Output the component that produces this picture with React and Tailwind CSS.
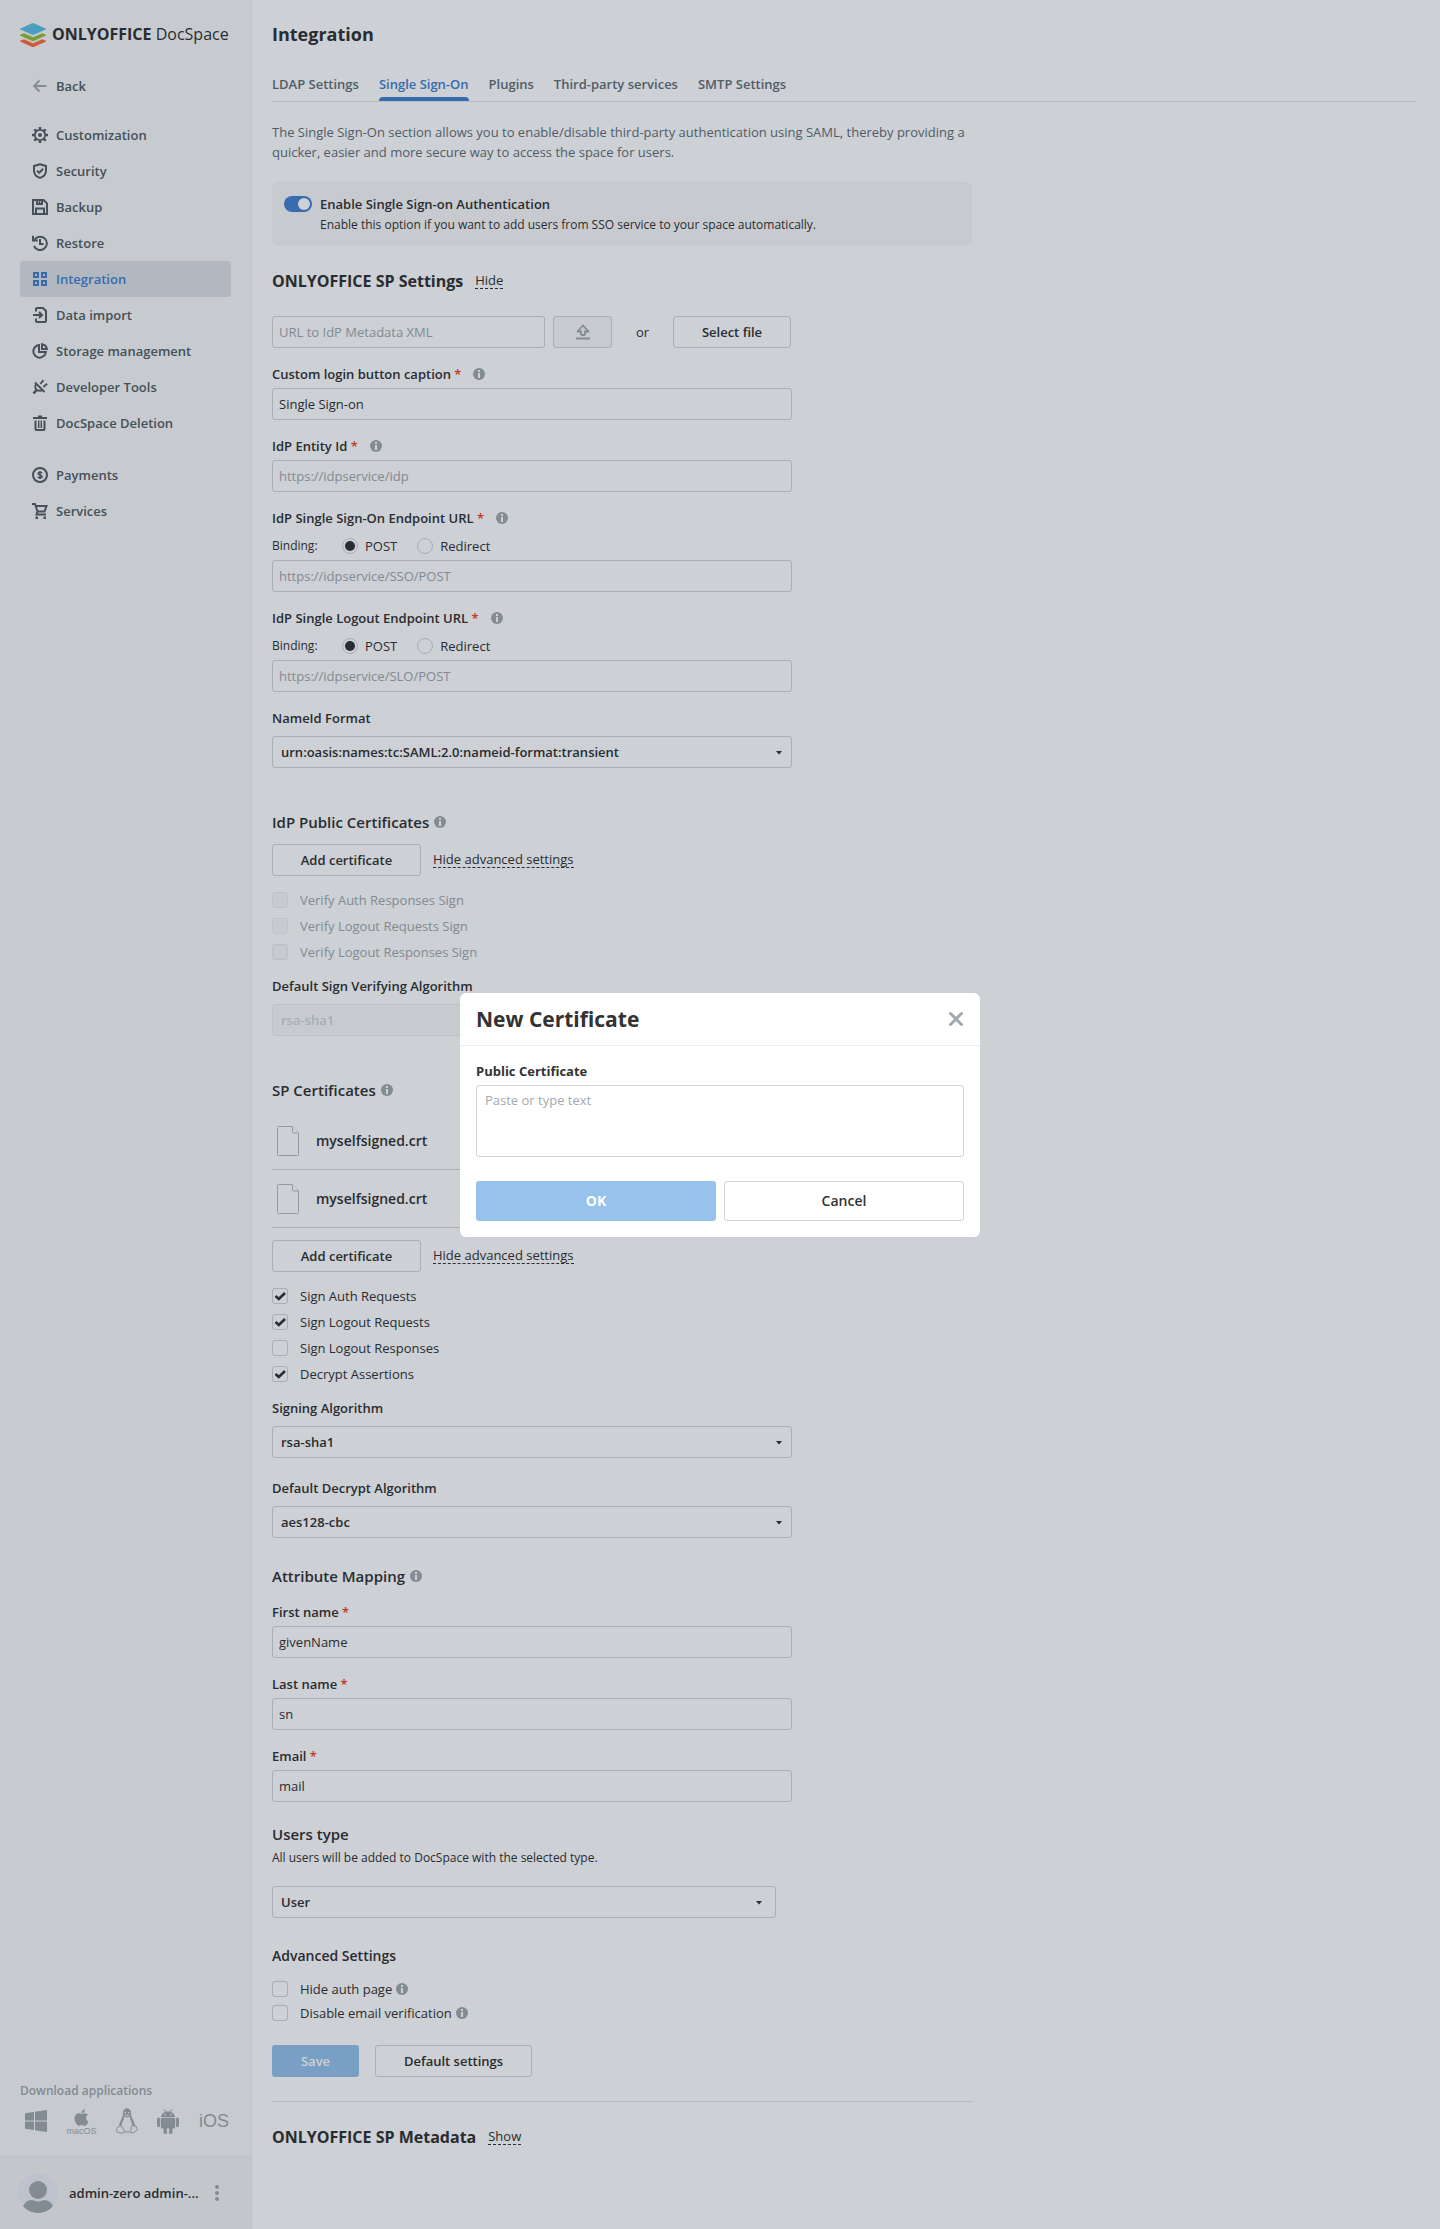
import React from "react";
import { FaApple } from "react-icons/fa";

const Svg = ({ children, size = 16, ...rest }) => (
  <svg width={size} height={size} viewBox="0 0 16 16" fill="none" stroke="currentColor" strokeWidth="2" aria-hidden="true" className="shrink-0" {...rest}>
    {children}
  </svg>
);

const icons = {
  customization: (
    <Svg>
      <circle cx="8" cy="8" r="5.2" strokeWidth="1.800" />
      <circle cx="8" cy="8" r="2" fill="currentColor" stroke="none" />
      <path strokeWidth="2.6" d="M8 0v2.6M8 13.4V16M0 8h2.6M13.4 8H16M2.3 2.3l1.9 1.9M11.8 11.8l1.900 1.900M2.3 13.7l1.9-1.9M11.8 4.2l1.9-1.9" />
    </Svg>
  ),
  security: (
    <Svg>
      <path d="M8 1.2 14 3v4.500c0 3.600-2.400 6.200-6 7.400-3.600-1.200-6-3.800-6-7.400V3z" strokeLinejoin="round" />
      <path d="m5 7.600 2.200 2.200 4-4" />
    </Svg>
  ),
  backup: (
    <Svg>
      <path d="M1 1h10.600L15 4.400V15H1z" />
      <path d="M5 1v4h5V1M4 15V9.500h8V15" />
      <path d="M7.500 2v2" strokeWidth="1.500" />
    </Svg>
  ),
  restore: (
    <Svg>
      <path d="M2.600 4.600A6.700 6.700 0 1 1 2 11" />
      <path d="M1 0.800v4.700h4.700M8 4v5h3.500" />
    </Svg>
  ),
  integration: (
    <Svg>
      <path d="M2 2h4v4H2zM10 2h4v4h-4zM2 10h4v4H2zM10 10h4v4h-4z" />
    </Svg>
  ),
  dataImport: (
    <Svg>
      <path d="M4 4.500V2a1 1 0 0 1 1-1h6l3 3v10a1 1 0 0 1-1 1H5a1 1 0 0 1-1-1v-2.500" />
      <path d="M1 8h8.500M7 5l3 3-3 3" />
    </Svg>
  ),
  storage: (
    <Svg>
      <path d="M7 2.100A6.300 6.300 0 1 0 13.900 9H7z" />
      <path d="M10 1.200c2.700.4 4.500 2.200 4.900 4.800H10z" />
    </Svg>
  ),
  developer: (
    <Svg strokeWidth="1.800">
      <path d="M3 3.500 12.500 13M4 4.800c-1 2.600-.9 4.700.3 5.900 1.200 1.200 3.600 1.300 6.700.6" />
      <path d="M8.300 5 11.500 1.200M11.300 8l3.900-3.200" />
      <path strokeWidth="2.600" d="M4.800 10.800 1.500 14.500" />
    </Svg>
  ),
  trash: (
    <Svg>
      <path d="M1 3h14M6 1.500h4M3.500 5.500V14a1 1 0 0 0 1 1h7a1 1 0 0 0 1-1V5.500" />
      <path d="M6.700 5.500V13M9.300 5.500V13" strokeWidth="1.500" />
    </Svg>
  ),
  payments: (
    <Svg>
      <circle cx="8" cy="8" r="7" />
      <path strokeWidth="1.500" d="M10 6.200C9.600 5.500 8.900 5.200 8 5.200c-1.200 0-1.900.5-1.900 1.300 0 2 3.900.9 3.900 3 0 .8-.8 1.300-2 1.300-.9 0-1.700-.3-2.100-1M8 4v8" />
    </Svg>
  ),
  services: (
    <Svg>
      <path d="M0 1h3l2.500 7.500h7L14.500 3H4M5.500 8.500 4.500 11.500H14" />
      <path fill="currentColor" stroke="none" d="M3.500 13.500H6V16H3.500zM11.500 13.500H14V16h-2.500z" />
    </Svg>
  ),
};

const Info = () => (
  <button type="button" aria-label="More information" className="text-[#a3a9ae]">
    <svg width="12" height="12" viewBox="0 0 12 12" className="block" aria-hidden="true">
      <circle cx="6" cy="6" r="6" fill="currentColor" />
      <path fill="#fff" d="M5 2h2v2H5zM5 5h2v5H5z" />
    </svg>
  </button>
);

function NavItem({ icon, label, active }) {
  return (
    <a
      href="#"
      className={
        "flex h-9 items-center gap-2 rounded-[3px] px-3 font-semibold " +
        (active ? "bg-[#dfe2e6] text-[#4781d1]" : "text-[#555f65]")
      }
    >
      {icons[icon]}
      {label}
    </a>
  );
}

const WindowsLogo = () => (
  <svg width="22" height="22" viewBox="0 0 22 22" fill="currentColor" aria-hidden="true">
    <path d="M0 3.200 9 2v8.500H0zM10 1.800 22 0v10.500H10zM0 11.500h9V20l-9-1.200zM10 11.500h12V22l-12-1.800z" />
  </svg>
);

const LinuxLogo = () => (
  <svg width="22" height="26" viewBox="0 0 22 26" fill="none" stroke="currentColor" aria-hidden="true">
    <path fill="currentColor" d="M7.500 7.500C7 3.500 8 .8 11 .8s4 2.700 3.500 6.700L11 9z" />
    <path d="M7.500 7.500C7 11 4 13 3.800 18.500M14.500 7.500C15 11 18 13 18.200 18.500" strokeWidth="1.500" />
    <path d="M8 8.500c-.5 3.500-2.500 5.500-2.700 9M14 8.500c.5 3.500 2.500 5.500 2.700 9M8 24h6.500" />
    <path d="M4 17.500c1.500 0 2.500 2.500 4 4.500 1 1.800 0 3.200-2 3.200s-3-1-5-1.200c-1.200-.3.200-2-.2-3.700 0-1.500 2.200-.8 3.200-2.800zM16.500 17.200c-1.700.2-1 3.500-1.800 5.500-.4 1.800.8 2.700 2.300 2.300 1.800-.5 2-2 4.300-3 .8-.5-.8-1.200-1-3-.3-2-1.800-.3-3.800-1.800z" />
    <path stroke="#f8f9f9" d="M8.500 4.500h1.500M12 4.500h1.500M9 6.500l2 1 2-1" />
  </svg>
);

const AndroidLogo = () => (
  <svg width="22" height="25" viewBox="0 0 22 25" fill="currentColor" aria-hidden="true">
    <path d="M4 8.200C4 5 7 2.500 11 2.500s7 2.500 7 5.700z" />
    <path d="M7.300.6 8.600 3M14.700.6 13.400 3" stroke="currentColor" strokeLinecap="round" />
    <path d="M4 9h14v9.500a1 1 0 0 1-1 1H5a1 1 0 0 1-1-1z" />
    <rect x="0" y="8.500" width="3.200" height="9.500" rx="1.600" />
    <rect x="18.800" y="8.500" width="3.200" height="9.500" rx="1.600" />
    <rect x="6.500" y="16" width="3.400" height="9" rx="1.600" />
    <rect x="12.100" y="16" width="3.400" height="9" rx="1.600" />
    <circle cx="8" cy="5.700" r=".7" fill="#f8f9f9" />
    <circle cx="14" cy="5.700" r=".7" fill="#f8f9f9" />
  </svg>
);

function Sidebar() {
  return (
    <aside className="flex w-[252px] shrink-0 flex-col border-r border-[#eceef1] bg-[#f8f9f9]">
      <a href="#" className="mt-[23px] flex h-6 items-start gap-1.5 pl-5 text-[#333]">
        <svg width="26" height="24" viewBox="0 0 26 24" aria-hidden="true" className="shrink-0">
          <path fill="#ff6f3d" d="M.5 17.600 4 16.200l9 4 9-4 3.500 1.400c.7.300.7.800 0 1.100l-11.100 5a3 3 0 0 1-2.800 0l-11.100-5c-.7-.3-.7-.8 0-1.100z" />
          <path fill="#95c038" d="M.5 11.600 4 10.200l9 4 9-4 3.500 1.400c.7.300.7.800 0 1.100l-11.100 5a3 3 0 0 1-2.800 0l-11.100-5c-.7-.3-.7-.8 0-1.100z" />
          <path fill="#5dc0e8" d="M.5 5.400 11.600.4a3 3 0 0 1 2.800 0l11.100 5c.7.300.7.900 0 1.200l-11.100 5a3 3 0 0 1-2.800 0L.5 6.600c-.7-.3-.7-.9 0-1.200z" />
        </svg>
        <span className="text-base leading-[22px] whitespace-nowrap">
          <b>ONLYOFFICE</b> DocSpace
        </span>
      </a>
      <nav className="mt-[21px] flex flex-col px-5">
        <a href="#" className="flex h-9 items-center gap-2 px-3 font-semibold text-[#555f65]">
          <Svg strokeWidth="1.800" className="shrink-0 text-[#a3a9ae]">
            <path d="M14.500 8H2M7.500 2.500 2 8l5.500 5.500" />
          </Svg>
          Back
        </a>
        <div className="mt-[13px] flex flex-col">
          <NavItem icon="customization" label="Customization" />
          <NavItem icon="security" label="Security" />
          <NavItem icon="backup" label="Backup" />
          <NavItem icon="restore" label="Restore" />
          <NavItem icon="integration" label="Integration" active />
          <NavItem icon="dataImport" label="Data import" />
          <NavItem icon="storage" label="Storage management" />
          <NavItem icon="developer" label="Developer Tools" />
          <NavItem icon="trash" label="DocSpace Deletion" />
        </div>
        <div className="mt-4 flex flex-col">
          <NavItem icon="payments" label="Payments" />
          <NavItem icon="services" label="Services" />
        </div>
      </nav>
      <div className="mt-auto px-5 pb-[21px]">
        <p className="text-xs leading-4 font-semibold text-[#a3a9ae]">Download applications</p>
        <div className="mt-2 flex h-7 items-center justify-between pr-0.5 pl-[5px] text-[#a3a9ae]">
          <a href="#" aria-label="Windows"><WindowsLogo /></a>
          <a href="#" aria-label="macOS" className="flex flex-col items-center font-['Liberation_Sans',sans-serif] text-[9px] leading-2">
            <FaApple size={19} />
            macOS
          </a>
          <a href="#" aria-label="Linux"><LinuxLogo /></a>
          <a href="#" aria-label="Android"><AndroidLogo /></a>
          <a href="#" className="font-['Liberation_Sans',sans-serif] text-lg leading-6">iOS</a>
        </div>
      </div>
      <div className="flex h-[73px] items-center border-t border-[#eceef1] bg-[#f3f4f4] pl-[18px]">
        <svg width="40" height="40" viewBox="0 0 40 40" aria-hidden="true" className="shrink-0">
          <clipPath id="avatar"><circle cx="20" cy="20" r="20" /></clipPath>
          <g clipPath="url(#avatar)">
            <circle cx="20" cy="20" r="20" fill="#ebeef5" />
            <circle cx="20" cy="17" r="9" fill="#a3a9ae" />
            <path fill="#a3a9ae" d="M5 33c2-4 5-6 8.500-6 2 0 3.500 1.500 6.500 1.500s4.500-1.500 6.500-1.500c3.500 0 6.500 2 8.500 6-3 4.500-9 7-15 7S8 37.500 5 33z" />
          </g>
        </svg>
        <span className="ml-[11px] w-[132px] font-semibold whitespace-nowrap text-[#333]">admin-zero admin-...</span>
        <button type="button" aria-label="Profile menu" className="ml-3.5 text-[#a3a9ae]">
          <svg width="4" height="16" viewBox="0 0 4 16" fill="currentColor" className="block" aria-hidden="true">
            <circle cx="2" cy="2" r="2" /><circle cx="2" cy="8" r="2" /><circle cx="2" cy="14" r="2" />
          </svg>
        </button>
      </div>
    </aside>
  );
}

const inputClass =
  "block h-8 rounded-[3px] border border-[#d0d5da] bg-white px-1.5 text-[#333] placeholder:text-[#a3a9ae] placeholder:opacity-100";
const buttonClass = "h-8 rounded-[3px] border border-[#d0d5da] bg-white text-center font-semibold text-[#333]";

const Star = () => <span className="text-[#f2431e]"> *</span>;

function Field({ id, label, info, binding, placeholder, value }) {
  return (
    <div className="mt-4">
      <div className="flex h-5 items-center gap-3">
        <label htmlFor={id} className="font-semibold">{label}<Star /></label>
        {info && <Info />}
      </div>
      {binding && (
        <div role="radiogroup" aria-label={label + " binding"} className="mt-2 flex h-5 items-center">
          <span className="w-[70px] text-xs leading-5">Binding:</span>
          <Radio name={id} label="POST" checked />
          <Radio name={id} label="Redirect" />
        </div>
      )}
      <input id={id} className={inputClass + " mt-1 w-full"} placeholder={placeholder} defaultValue={value} />
    </div>
  );
}

function Radio({ name, label, checked }) {
  return (
    <label className="mr-5 flex items-center gap-[7px]">
      <input
        type="radio"
        name={name + "-binding"}
        defaultChecked={checked}
        className="grid size-4 appearance-none place-items-center rounded-full border border-[#d0d5da] bg-white before:size-2.5 before:rounded-full checked:before:bg-[#333]"
      />
      {label}
    </label>
  );
}

function Select({ id, label, value, disabled, width }) {
  return (
    <div className={"relative " + (width || "")}>
      <select
        id={id}
        aria-label={label}
        disabled={disabled}
        className={
          "block h-8 w-full appearance-none rounded-[3px] border px-2 font-semibold opacity-100 " +
          (disabled ? "border-[#eceef1] bg-[#f8f9f9] text-[#d0d5da]" : "border-[#d0d5da] bg-white text-[#333]")
        }
      >
        <option>{value}</option>
      </select>
      {!disabled && (
        <svg width="6" height="4" viewBox="0 0 6 4" className={"pointer-events-none absolute top-[15px] " + (width ? "right-3.5" : "right-2.5")} aria-hidden="true">
          <path d="M0 0h6L3 3.500z" fill="#333" />
        </svg>
      )}
    </div>
  );
}

function Check({ label, checked, disabled, info }) {
  return (
    <div className="flex h-4 items-center gap-1">
      <label className={"flex items-center gap-3 " + (disabled ? "text-[#a3a9ae]" : "text-[#333]")}>
        <span className="relative size-4">
          <input
            type="checkbox"
            defaultChecked={checked}
            disabled={disabled}
            className={
              "block size-4 appearance-none rounded-[3px] border " +
              (disabled ? "border-[#eceef1] bg-[#f8f9f9]" : "border-[#d0d5da] bg-white")
            }
          />
          {checked && (
            <svg width="16" height="16" viewBox="0 0 16 16" className="pointer-events-none absolute inset-0" aria-hidden="true">
              <path d="M3.500 8 6.800 11 13 5" fill="none" stroke="#333" strokeWidth="2.600" />
            </svg>
          )}
        </span>
        {label}
      </label>
      {info && <Info />}
    </div>
  );
}

const DashedLink = ({ children }) => (
  <a href="#" className="border-b border-dashed border-[#333] leading-[15px]">{children}</a>
);

const SubHeading = ({ children, info = true }) => (
  <div className="flex h-5 items-center gap-[5px]">
    <h3 className="text-[15px] leading-5 font-semibold">{children}</h3>
    {info && <Info />}
  </div>
);

function CertRow() {
  return (
    <li className="flex h-[58px] items-center border-b border-[#d0d5da] pl-[5px]">
      <svg width="22" height="30" viewBox="0 0 22 30" fill="#fff" stroke="#b8bcc0" aria-hidden="true">
        <path d="M1.500.5H15l6.500 6.500v21.500a1 1 0 0 1-1 1h-19a1 1 0 0 1-1-1V1.500a1 1 0 0 1 1-1z" />
        <path d="M15.500.5V6a1 1 0 0 0 1 1h5" />
      </svg>
      <span className="ml-[17px] text-sm font-semibold">myselfsigned.crt</span>
    </li>
  );
}

function CertActions() {
  return (
    <div className="flex items-center gap-3">
      <button type="button" className={buttonClass + " w-[149px]"}>Add certificate</button>
      <DashedLink>Hide advanced settings</DashedLink>
    </div>
  );
}

function Tabs() {
  const tabs = ["LDAP Settings", "Single Sign-On", "Plugins", "Third-party services", "SMTP Settings"];
  return (
    <nav className="mt-7 flex h-7 gap-5 border-b border-[#e3e6e9] font-semibold text-[#657077]">
      {tabs.map((tab) =>
        tab === "Single Sign-On" ? (
          <a key={tab} href="#" aria-current="page" className="flex flex-col justify-between text-[#4781d1]">
            {tab}
            <span className="h-1 rounded-t-sm bg-[#4781d1]" />
          </a>
        ) : (
          <a key={tab} href="#">{tab}</a>
        )
      )}
    </nav>
  );
}

function Main() {
  return (
    <main className="min-w-0 flex-1 bg-white pr-6 pb-20 pl-5 text-[#333]">
      <h1 className="mt-[22px] text-lg leading-6 font-bold">Integration</h1>
      <Tabs />
      <div className="max-w-[700px]">
        <p className="mt-5 leading-5 text-[#657077]">
          The Single Sign-On section allows you to enable/disable third-party authentication using SAML, thereby providing a
          quicker, easier and more secure way to access the space for users.
        </p>
        <label className="mt-5 flex h-16 gap-2 rounded-md bg-[#f8f9f9] px-3 pt-3">
          <input
            type="checkbox"
            role="switch"
            defaultChecked
            className="mt-0.5 flex h-4 w-7 shrink-0 appearance-none items-center justify-end rounded-full bg-[#4781d1] px-0.5 before:size-3 before:rounded-full before:bg-white"
          />
          <span>
            <span className="block leading-5 font-semibold">Enable Single Sign-on Authentication</span>
            <span className="block text-xs leading-[22px]">
              Enable this option if you want to add users from SSO service to your space automatically.
            </span>
          </span>
        </label>
      </div>

      <div className="mt-6 flex h-[22px] items-center gap-3">
        <h2 className="text-base leading-[22px] font-bold">ONLYOFFICE SP Settings</h2>
        <DashedLink>Hide</DashedLink>
      </div>

      <div className="max-w-[520px]">
        <div className="mt-6 flex items-center">
          <input aria-label="URL to IdP Metadata XML" className={inputClass + " w-[273px]"} placeholder="URL to IdP Metadata XML" />
          <button type="button" aria-label="Upload" className="ml-2 grid h-8 w-[59px] place-items-center rounded-[3px] border border-[#d0d5da] bg-[#f8f9f9] text-[#a3a9ae]">
            <Svg>
              <path strokeWidth="1.800" strokeLinejoin="round" d="M6 11V7.500H2.500L8 1.500l5.500 6H10V11M6 11h4" />
              <path d="M1 14.500h14" />
            </Svg>
          </button>
          <span className="w-[61px] text-center">or</span>
          <button type="button" className={buttonClass + " w-[118px]"}>Select file</button>
        </div>

        <Field id="caption" label="Custom login button caption" info value="Single Sign-on" />
        <Field id="entity" label="IdP Entity Id" info placeholder="https://idpservice/idp" />
        <Field id="sso" label="IdP Single Sign-On Endpoint URL" info binding placeholder="https://idpservice/SSO/POST" />
        <Field id="slo" label="IdP Single Logout Endpoint URL" info binding placeholder="https://idpservice/SLO/POST" />
        <label htmlFor="nameid" className="mt-4 mb-2 block leading-5 font-semibold">NameId Format</label>
        <Select id="nameid" value="urn:oasis:names:tc:SAML:2.0:nameid-format:transient" />

        <div className="mt-11 mb-3"><SubHeading>IdP Public Certificates</SubHeading></div>
        <CertActions />
        <div className="mt-4 flex flex-col gap-2.5">
          <Check disabled label="Verify Auth Responses Sign" />
          <Check disabled label="Verify Logout Requests Sign" />
          <Check disabled label="Verify Logout Responses Sign" />
        </div>
        <label htmlFor="verify" className="mt-4 mb-2 block leading-5 font-semibold">Default Sign Verifying Algorithm</label>
        <Select id="verify" value="rsa-sha1" disabled />

        <div className="mt-11 mb-3"><SubHeading>SP Certificates</SubHeading></div>
        <ul className="mb-3">
          <CertRow />
          <CertRow />
        </ul>
        <CertActions />
        <div className="mt-4 flex flex-col gap-2.5">
          <Check checked label="Sign Auth Requests" />
          <Check checked label="Sign Logout Requests" />
          <Check label="Sign Logout Responses" />
          <Check checked label="Decrypt Assertions" />
        </div>
        <label htmlFor="signing" className="mt-4 mb-2 block leading-5 font-semibold">Signing Algorithm</label>
        <Select id="signing" value="rsa-sha1" />
        <label htmlFor="decrypt" className="mt-5 mb-2 block leading-5 font-semibold">Default Decrypt Algorithm</label>
        <Select id="decrypt" value="aes128-cbc" />

        <div className="mt-7"><SubHeading>Attribute Mapping</SubHeading></div>
        <Field id="first" label="First name" value="givenName" />
        <Field id="last" label="Last name" value="sn" />
        <Field id="email" label="Email" value="mail" />

        <div className="mt-[22px]"><SubHeading info={false}>Users type</SubHeading></div>
        <p className="mt-1.5 mb-5 text-xs leading-4">All users will be added to DocSpace with the selected type.</p>
        <Select id="usertype" label="Users type" value="User" width="max-w-[504px]" />

        <h3 className="mt-7 mb-[15px] text-sm leading-5 font-semibold">Advanced Settings</h3>
        <div className="flex flex-col gap-2">
          <Check label="Hide auth page" info />
          <Check label="Disable email verification" info />
        </div>
        <div className="mt-6 flex gap-4">
          <button type="button" className="h-8 w-[87px] rounded-[3px] bg-[#97c2ec] font-semibold text-white">Save</button>
          <button type="button" className={buttonClass + " w-[157px]"}>Default settings</button>
        </div>
      </div>

      <hr className="mt-6 max-w-[701px] border-[#e3e6e9]" />
      <div className="mt-6 flex h-[22px] items-center gap-3">
        <h2 className="text-base leading-[22px] font-bold">ONLYOFFICE SP Metadata</h2>
        <DashedLink>Show</DashedLink>
      </div>
    </main>
  );
}

function Modal() {
  return (
    <div className="fixed inset-0 z-10 flex items-center justify-center bg-[#061626]/20">
      <form role="dialog" aria-modal="true" aria-labelledby="dialog-title" className="w-full max-w-[520px] rounded-md bg-white text-[#333]">
        <header className="flex h-[53px] items-center justify-between border-b border-[#eceef1] px-4">
          <h2 id="dialog-title" className="text-[21px] leading-7 font-bold">New Certificate</h2>
          <button type="button" aria-label="Close" className="text-[#a3a9ae]">
            <Svg><path strokeWidth="3" strokeLinecap="round" d="M2.500 2.500l11 11M13.500 2.500l-11 11" /></Svg>
          </button>
        </header>
        <div className="px-4 pt-[15px] pb-4">
          <label htmlFor="certificate" className="block leading-5 font-bold">Public Certificate</label>
          <textarea
            id="certificate"
            placeholder="Paste or type text"
            className="mt-1 block h-[72px] w-full resize-none rounded-[3px] border border-[#d0d5da] px-2 py-1 leading-5 placeholder:text-[#a3a9ae] placeholder:opacity-100"
          />
          <div className="mt-6 grid grid-cols-2 gap-2 text-sm font-semibold">
            <button type="submit" className="h-10 rounded-[3px] bg-[#97c2ec] font-bold text-white">OK</button>
            <button type="button" className="h-10 rounded-[3px] border border-[#d0d5da]">Cancel</button>
          </div>
        </div>
      </form>
    </div>
  );
}

export default function App() {
  return (
    <div className="flex min-h-screen font-['Open_Sans',sans-serif] text-[13px] leading-5">
      <Sidebar />
      <Main />
      <Modal />
    </div>
  );
}
